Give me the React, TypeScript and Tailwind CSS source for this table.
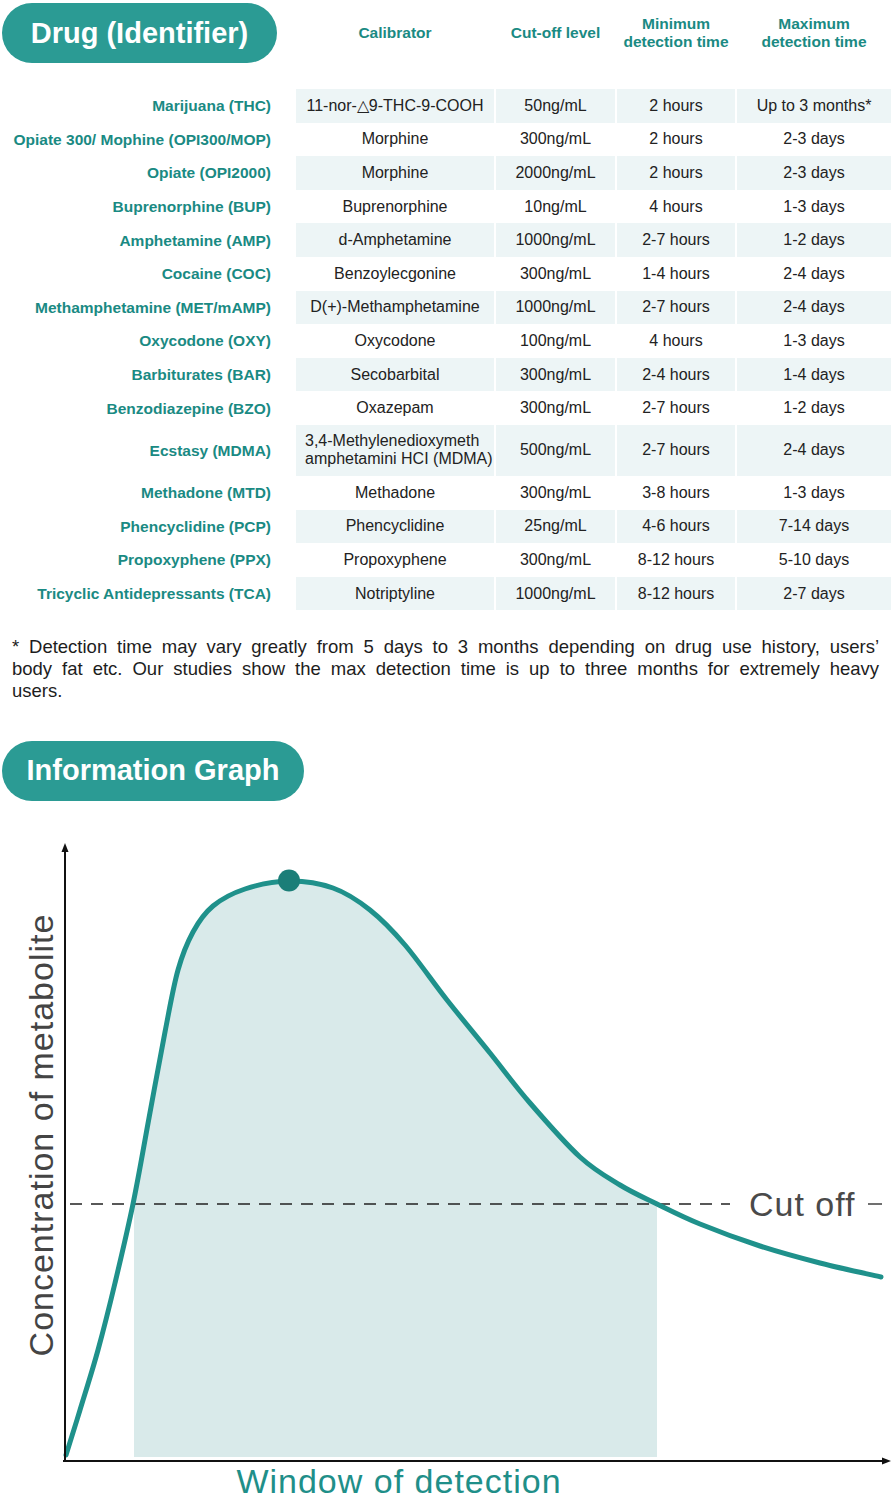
import React from 'react';

type Row = {
  drug: string;
  cal: React.ReactNode;
  cut: string;
  min: string;
  max: string;
  tall?: boolean;
};

const rows: Row[] = [
  { drug: 'Marijuana (THC)', cal: '11-nor-△9-THC-9-COOH', cut: '50ng/mL', min: '2 hours', max: 'Up to 3 months*' },
  { drug: 'Opiate 300/ Mophine (OPI300/MOP)', cal: 'Morphine', cut: '300ng/mL', min: '2 hours', max: '2-3 days' },
  { drug: 'Opiate (OPI2000)', cal: 'Morphine', cut: '2000ng/mL', min: '2 hours', max: '2-3 days' },
  { drug: 'Buprenorphine (BUP)', cal: 'Buprenorphine', cut: '10ng/mL', min: '4 hours', max: '1-3 days' },
  { drug: 'Amphetamine (AMP)', cal: 'd-Amphetamine', cut: '1000ng/mL', min: '2-7 hours', max: '1-2 days' },
  { drug: 'Cocaine (COC)', cal: 'Benzoylecgonine', cut: '300ng/mL', min: '1-4 hours', max: '2-4 days' },
  { drug: 'Methamphetamine (MET/mAMP)', cal: 'D(+)-Methamphetamine', cut: '1000ng/mL', min: '2-7 hours', max: '2-4 days' },
  { drug: 'Oxycodone (OXY)', cal: 'Oxycodone', cut: '100ng/mL', min: '4 hours', max: '1-3 days' },
  { drug: 'Barbiturates (BAR)', cal: 'Secobarbital', cut: '300ng/mL', min: '2-4 hours', max: '1-4 days' },
  { drug: 'Benzodiazepine (BZO)', cal: 'Oxazepam', cut: '300ng/mL', min: '2-7 hours', max: '1-2 days' },
  {
    drug: 'Ecstasy (MDMA)',
    cal: (
      <span className="block text-left w-full pl-[9px]">
        3,4-Methylenedioxymeth
        <br />
        amphetamini HCI (MDMA)
      </span>
    ),
    cut: '500ng/mL',
    min: '2-7 hours',
    max: '2-4 days',
    tall: true
  },
  { drug: 'Methadone (MTD)', cal: 'Methadone', cut: '300ng/mL', min: '3-8 hours', max: '1-3 days' },
  { drug: 'Phencyclidine (PCP)', cal: 'Phencyclidine', cut: '25ng/mL', min: '4-6 hours', max: '7-14 days' },
  { drug: 'Propoxyphene (PPX)', cal: 'Propoxyphene', cut: '300ng/mL', min: '8-12 hours', max: '5-10 days' },
  { drug: 'Tricyclic Antidepressants (TCA)', cal: 'Notriptyline', cut: '1000ng/mL', min: '8-12 hours', max: '2-7 days' }
];

// points traced along the metabolite curve (page coordinates)
const curve: number[][] = [
  [66, 1455], [80, 1410], [98, 1350], [115, 1283], [133, 1204], [149, 1118], [165, 1032],
  [178, 970], [193, 932], [213, 906], [245, 889], [289, 881], [333, 888], [370, 910],
  [405, 945], [447, 1000], [490, 1053], [530, 1103], [580, 1157], [620, 1185], [657, 1204],
  [700, 1224], [760, 1246], [820, 1263], [881, 1277]
];

const segments = (pts: number[][], from: number, to: number) => {
  let d = '';
  for (let i = from; i < to; i++) {
    const p0 = pts[i - 1] || pts[i];
    const p1 = pts[i];
    const p2 = pts[i + 1];
    const p3 = pts[i + 2] || p2;
    const c1x = p1[0] + (p2[0] - p0[0]) / 6;
    const c1y = p1[1] + (p2[1] - p0[1]) / 6;
    const c2x = p2[0] - (p3[0] - p1[0]) / 6;
    const c2y = p2[1] - (p3[1] - p1[1]) / 6;
    d += ` C${c1x.toFixed(1)},${c1y.toFixed(1)} ${c2x.toFixed(1)},${c2y.toFixed(1)} ${p2[0]},${p2[1]}`;
  }
  return d;
};

const lineD = `M${curve[0][0]},${curve[0][1]}` + segments(curve, 0, curve.length - 1);
const startIdx = 4;
const endIdx = 20;
const fillD =
  `M134,1457 L134,1204 L${curve[startIdx][0]},${curve[startIdx][1]}` +
  segments(curve, startIdx, endIdx) +
  ' L657,1457 Z';

const cols = 'grid grid-cols-[294px_198px_119px_118px_154px] gap-x-[2px]';

const Graph = () => (
  <svg width="893" height="699" viewBox="0 801 893 699" className="block">
    <path d={fillD} fill="#d9eaea" />
    <line x1="70" y1="1204" x2="730" y2="1204" stroke="#222" strokeWidth="1.3" strokeDasharray="12 9" />
    <line x1="868" y1="1204" x2="882" y2="1204" stroke="#222" strokeWidth="1.3" />
    <path d={lineD} fill="none" stroke="#1f918b" strokeWidth="5" strokeLinecap="round" strokeLinejoin="round" />
    <circle cx="289" cy="880.5" r="11" fill="#1b7e78" />
    <line x1="65" y1="1462" x2="65" y2="849" stroke="#111" strokeWidth="2" />
    <polygon points="65,843 61.5,852 68.5,852" fill="#111" />
    <line x1="63" y1="1461" x2="884" y2="1461" stroke="#111" strokeWidth="2" />
    <polygon points="891,1461 882,1457.5 882,1464.5" fill="#111" />
    <text
      x="749"
      y="1216"
      fontFamily="'Liberation Sans', Arial, sans-serif"
      fontSize="34"
      letterSpacing="1"
      fill="#4a4a4a"
    >
      Cut off
    </text>
    <text
      transform="translate(53,1135) rotate(-90)"
      textAnchor="middle"
      fontFamily="'Liberation Sans', Arial, sans-serif"
      fontSize="34"
      letterSpacing="1"
      fill="#444444"
    >
      Concentration of metabolite
    </text>
    <text
      x="399"
      y="1493"
      textAnchor="middle"
      fontFamily="'Liberation Sans', Arial, sans-serif"
      fontSize="34"
      letterSpacing="1"
      fill="#1f8f89"
    >
      Window of detection
    </text>
  </svg>
);

const App = () => (
  <div className="w-[893px] bg-white font-['Liberation_Sans',Arial,sans-serif] text-[#222]">
    <div className={`${cols} mt-[3px] h-[60px] items-center text-[15.5px] font-bold leading-[18px] text-[#1a8a83] text-center`}>
      <div className="ml-[2px] w-[275px] h-[60px] rounded-full bg-[#2b9b94] flex items-center justify-center text-[29px] text-white">
        Drug (Identifier)
      </div>
      <div>Calibrator</div>
      <div>Cut-off level</div>
      <div>
        Minimum
        <br />
        detection time
      </div>
      <div>
        Maximum
        <br />
        detection time
      </div>
    </div>

    <div className="mt-[26px]">
      {rows.map((row, i) => {
        const shade = i % 2 === 0 ? 'bg-[#edf5f6]' : '';
        const cell = `flex items-center justify-center text-[16px] leading-[18px] ${shade}`;
        return (
          <div key={row.drug} className={`${cols} ${row.tall ? 'h-[51px]' : 'h-[33.6px]'}`}>
            <div className="flex items-center justify-end pr-[23px] text-[15.5px] font-bold text-[#1a8a83]">
              {row.drug}
            </div>
            <div className={cell}>{row.cal}</div>
            <div className={cell}>{row.cut}</div>
            <div className={cell}>{row.min}</div>
            <div className={cell}>{row.max}</div>
          </div>
        );
      })}
    </div>

    <div className="mt-[26px] pl-[12px] pr-[14px] text-[18.5px] leading-[22px] text-[#1d1d1d]">
      <p className="text-justify [text-align-last:justify]">
        * Detection time may vary greatly from 5 days to 3 months depending on drug use history, users’
      </p>
      <p className="text-justify [text-align-last:justify]">
        body fat etc. Our studies show the max detection time is up to three months for extremely heavy
      </p>
      <p>users.</p>
    </div>

    <div className="mt-[38.5px] ml-[2px] w-[302px] h-[60px] rounded-full bg-[#2b9b94] flex items-center justify-center text-[29px] font-bold text-white">
      Information Graph
    </div>

    <Graph />
  </div>
);

export default App;
